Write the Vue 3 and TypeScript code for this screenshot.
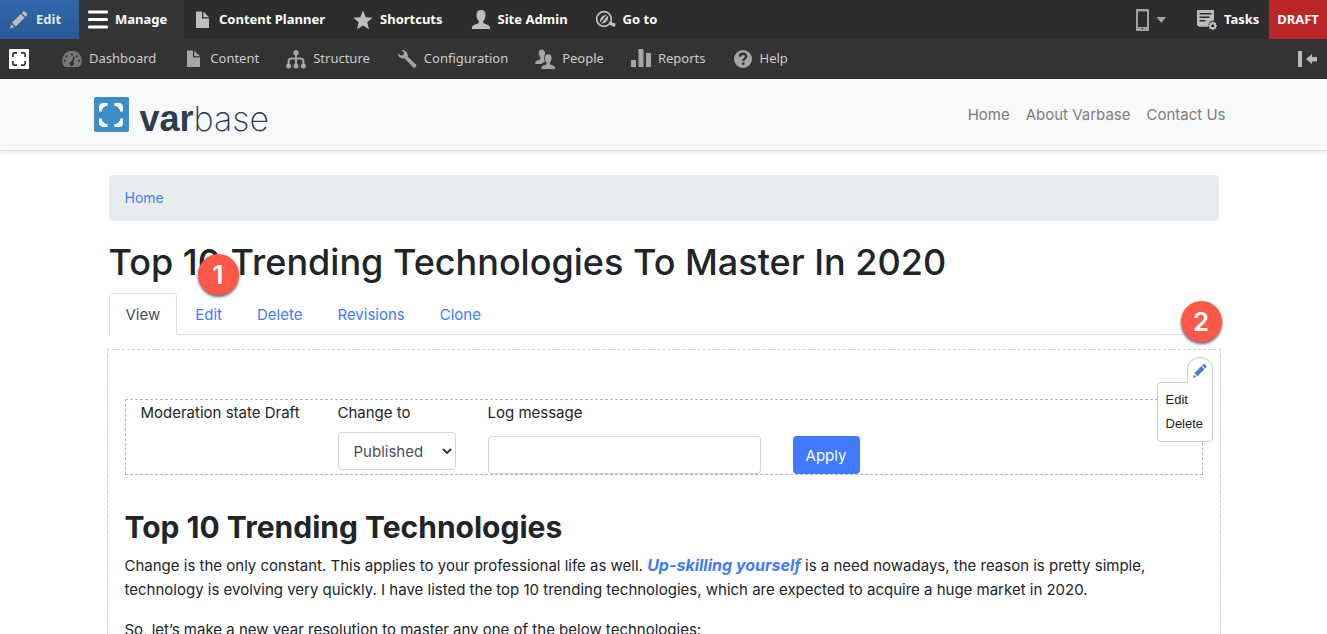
<script setup lang="ts">
import { ref } from 'vue'

interface NavItem {
  label: string
  icon: string
}

const barItems: NavItem[] = [
  { label: 'Content Planner', icon: 'file' },
  { label: 'Shortcuts', icon: 'star' },
  { label: 'Site Admin', icon: 'person' },
  { label: 'Go to', icon: 'goto' },
]

const trayItems: NavItem[] = [
  { label: 'Dashboard', icon: 'gauge' },
  { label: 'Content', icon: 'file' },
  { label: 'Structure', icon: 'tree' },
  { label: 'Configuration', icon: 'wrench' },
  { label: 'People', icon: 'people' },
  { label: 'Reports', icon: 'bars' },
  { label: 'Help', icon: 'help' },
]

const siteLinks: string[] = ['Home', 'About Varbase', 'Contact Us']
const tabs: string[] = ['View', 'Edit', 'Delete', 'Revisions', 'Clone']
const activeTab = ref('View')
const state = ref('Published')
const logMessage = ref('')
</script>

<template>
  <svg class="defs" aria-hidden="true">
    <symbol id="i-file" viewBox="0 0 20 20">
      <path d="M4 1.500h6v7h7V18H4z" />
      <path d="M11.300 1.500L17 7.300h-5.700z" />
    </symbol>
    <symbol id="i-star" viewBox="0 0 20 20">
      <path d="M10 .6l2.700 6.600 7 .5-5.400 4.600 1.700 6.900-6-3.800-6 3.800 1.700-6.900L.3 7.700l7-.5z" />
    </symbol>
    <symbol id="i-person" viewBox="0 0 20 20">
      <path d="M10 .1c-3 0-4.500 2-4.500 4.800 0 2.500.8 4.600 2.300 6v1.800c-.3 1.300-6.900 1.600-6.900 5v1.200h18.200v-1.200c0-3.400-6.600-3.700-6.900-5v-1.800c1.500-1.400 2.300-3.500 2.300-6C14.500 2.100 13 .1 10 .1z" />
    </symbol>
    <symbol id="i-goto" viewBox="0 0 20 20">
      <circle cx="8" cy="9" r="7.300" fill="none" stroke="currentColor" stroke-width="1.700" />
      <path d="M4.200 12.300C3 8.800 6.700 4.500 11 4.800 8 7 7.300 9.500 4.200 12.300zM5.100 13.300C8.500 11 8.800 7.800 12 5.700c1.300 3.700-2.700 8.500-6.900 7.600z" />
      <path d="M14 11.500l5.700 2.200-1 3.300-6.200-2.400z" />
    </symbol>
    <symbol id="i-gauge" viewBox="0 0 20 20">
      <path fill-rule="evenodd" d="M3 18C1 16 0 14 0 11.800a10 10 0 0 1 20 0c0 2.200-1 4.200-3 6.200zM9 4.200v2.200h2V4.200zM4 6l-.9 1.400 1.800 1 .8-1.300zM1.800 10.800v2h2v-2zM16.200 10.800v2h2v-2zM14.800 6l-1.100 1.500 1.400 1 1.200-1.400zM11.600 7.400l-2.200 5.200a2.200 2.200 0 1 0 1.900.5l1.700-5.200z" />
    </symbol>
    <symbol id="i-tree" viewBox="0 0 20 20">
      <circle cx="10" cy="3.700" r="2.600" />
      <circle cx="2.600" cy="16.900" r="2.500" />
      <circle cx="10" cy="16.900" r="2.500" />
      <circle cx="17.400" cy="16.900" r="2.500" />
      <path d="M10 3v13M2.600 16v-3.500q0-3 3-3h8.800q3 0 3 3V16" fill="none" stroke="currentColor" stroke-width="2" />
    </symbol>
    <symbol id="i-wrench" viewBox="0 0 20 20">
      <path d="M.6 4.200C1.300 8 4 10 7.800 9.400l8.200 8.800c1.700 1.800 4.500-.6 2.900-2.600L10.800 7.700C11.200 3.600 8.500.6 4.600.9l2.500 2.700-.6 2.500-2.700.4z" />
    </symbol>
    <symbol id="i-people" viewBox="0 0 20 20">
      <path d="M6.800.5C4.700.5 3.700 2 3.700 4c0 1.700.6 3.200 1.600 4.200V10C5 11.300.3 11.100.3 14v1.100h6.200c.6-1.200 2.100-1.800 3.600-2.200-1-1.800-1.300-4.200-.6-6.400l.6-1.200C10 2.100 9 .5 6.800.5z" />
      <path d="M13.300 5.300c-2.300 0-3.400 1.600-3.400 3.800 0 1.800.6 3.300 1.700 4.400v1.600c-.3 1-5.200 1.100-5.200 4v1H20v-1c0-2.900-4.800-3-5.100-4v-1.600c1.100-1.100 1.700-2.600 1.700-4.400 0-2.200-1-3.800-3.300-3.800z" />
    </symbol>
    <symbol id="i-bars" viewBox="0 0 20 20">
      <path d="M0 11h5v7H0zM7.500 0h5v18h-5zM15 4h5v14h-5z" />
    </symbol>
    <symbol id="i-help" viewBox="0 0 20 20">
      <circle cx="10" cy="10" r="9" />
      <path d="M6.900 7.800c0-4 6.300-3.900 6.300-.5 0 2.200-3 2.400-3 4.700" fill="none" stroke="#333" stroke-width="2.400" />
      <path d="M8.900 13.400h2.500v2.500H8.900z" fill="#333" />
    </symbol>
    <symbol id="i-pencil" viewBox="0 0 20 20">
      <path d="M3 12.700L11.800 3.900l3.800 3.800L6.800 16.500zM12.700 3l1.400-1.400q1-.8 1.900.1l1.800 1.800q.9 1 .1 1.900L16.500 6.800zM2.400 14.300l2.800 2.800L1 18.700z" />
    </symbol>
    <symbol id="i-tasks" viewBox="0 0 20 20">
      <path fill-rule="evenodd" d="M0 0h17v10.500c-3.800-.2-6 2.300-5.700 6.300H2L0 15zM2.500 3v1.400h12V3zM2.500 6.500v1.400h10V6.500zM2.500 10v1.400h6V10z" />
      <circle cx="15.700" cy="15.700" r="2.500" fill="none" stroke="currentColor" stroke-width="2" />
      <path d="M15.700 11.400v1.600M15.700 18.400V20M11.400 15.700H13M18.400 15.700H20M12.700 12.700l1.100 1.100M17.600 17.600l1.100 1.100M12.700 18.700l1.100-1.100M17.600 13.800l1.100-1.100" stroke="currentColor" stroke-width="1.600" />
    </symbol>
    <symbol id="i-brackets" viewBox="0 0 24 24">
      <path d="M8.600 1.500H4Q1.500 1.500 1.500 4v4.600M15.400 1.500H20q2.500 0 2.500 2.500v4.600M8.600 22.500H4q-2.500 0-2.500-2.500v-4.600M15.400 22.500H20q2.500 0 2.500-2.500v-4.600" fill="none" stroke="currentColor" stroke-width="2.800" />
    </symbol>
  </svg>

  <div class="page">
    <nav class="bar" aria-label="Administration toolbar">
      <button class="edit" type="button">
        <svg class="icon"><use href="#i-pencil" /></svg><span class="label">Edit</span>
      </button>
      <button class="manage" type="button">
        <svg class="icon" viewBox="0 0 20 20"><path d="M1 .5h18q1 0 1 1.500t-1 1.500H1Q0 3.500 0 2T1 .5zM1 8h18q1 0 1 1.500T19 11H1q-1 0-1-1.500T1 8zM1 15.500h18q1 0 1 1.500t-1 1.500H1q-1 0-1-1.500t1-1.500z" /></svg><span class="label">Manage</span>
      </button>
      <div class="items">
        <a v-for="item in barItems" :key="item.label" class="item" href="#">
          <svg class="icon"><use :href="'#i-' + item.icon" /></svg><span class="label">{{ item.label }}</span>
        </a>
      </div>
      <div class="bar-end">
        <button class="device" type="button" aria-label="Device preview">
          <svg width="30" height="22" viewBox="0 0 30 22">
            <path fill-rule="evenodd" d="M1 0h11q1 0 1 1v20q0 1-1 1H1q-1 0-1-1V1q0-1 1-1zM2 2.500v15.500h9V2.500zM5.700 19.300v1.200h1.600v-1.200z" />
            <path d="M20.500 8H30l-4.700 6z" />
          </svg>
        </button>
        <a class="item tasks" href="#"><svg class="icon"><use href="#i-tasks" /></svg><span class="label">Tasks</span></a>
        <span class="draft"><span class="label">DRAFT</span></span>
      </div>
    </nav>

    <nav class="tray" aria-label="Manage">
      <a class="tray-home" href="#" aria-label="Home"><svg><use href="#i-brackets" /></svg></a>
      <div class="items">
        <a v-for="item in trayItems" :key="item.label" class="item" :class="item.icon" href="#">
          <svg class="icon"><use :href="'#i-' + item.icon" /></svg><span class="label">{{ item.label }}</span>
        </a>
      </div>
      <button class="orient" type="button" aria-label="Vertical orientation">
        <svg width="20" height="16" viewBox="0 0 20 16"><path d="M0 0h4v16H0zM8 8l6-5v3h5v4.500h-5V13z" /></svg>
      </button>
    </nav>

    <header class="site-header">
      <div class="container header-row">
        <a class="brand" href="#">
          <span class="brand-mark">
            <svg viewBox="0 0 24 24">
              <use href="#i-brackets" />
              <path d="M2 2h4.500l-.6 1.900-1.400.6-.6 1.400L2 6.500zM22 2h-4.500l.6 1.900 1.400.6.6 1.400 1.900.6zM2 22h4.500l-.6-1.900-1.400-.6-.6-1.400-1.900-.6zM22 22h-4.500l.6-1.900 1.400-.6.6-1.400 1.900-.6z" />
            </svg>
          </span>
          <span class="brand-name"><b>var</b><span>base</span></span>
        </a>
        <nav class="site-nav" aria-label="Main">
          <a v-for="link in siteLinks" :key="link" href="#">{{ link }}</a>
        </nav>
      </div>
    </header>

    <main class="container content">
      <nav class="breadcrumb" aria-label="Breadcrumb"><a href="#">Home</a></nav>
      <div class="title-row">
        <h1>Top 10 Trending Technologies To Master In 2020</h1>
        <span class="marker marker-one">1</span>
      </div>
      <nav class="tabs" aria-label="Tabs">
        <a v-for="tab in tabs" :key="tab" href="#" :class="{ active: tab === activeTab }" @click.prevent="activeTab = tab">{{ tab }}</a>
        <span class="marker marker-two">2</span>
      </nav>

      <article class="region">
        <form class="moderation" @submit.prevent>
          <div class="field current">Moderation state Draft</div>
          <div class="field">
            <label for="state">Change to</label>
            <div class="select">
              <select id="state" v-model="state">
                <option>Published</option>
                <option>Draft</option>
              </select>
              <svg class="chevron" viewBox="0 0 10 6"><path d="M1 1l4 4 4-4" /></svg>
            </div>
          </div>
          <div class="field log">
            <label for="log">Log message</label>
            <input id="log" v-model="logMessage" type="text">
          </div>
          <button class="apply" type="submit">Apply</button>
        </form>

        <div class="contextual">
          <button class="trigger" type="button" aria-label="Configuration options"><svg><use href="#i-pencil" /></svg></button>
          <ul>
            <li><a href="#">Edit</a></li>
            <li><a href="#">Delete</a></li>
          </ul>
        </div>

        <h2>Top 10 Trending Technologies</h2>
        <p>Change is the only constant. This applies to your professional life as well. <a href="#"><em>Up-skilling yourself</em></a> is a need nowadays, the reason is pretty simple, technology is evolving very quickly. I have listed the top 10 trending technologies, which are expected to acquire a huge market in 2020.</p>
        <p>So, let’s make a new year resolution to master any one of the below technologies:</p>
      </article>
    </main>
  </div>
</template>

<style>
body {
  margin: 0;
}
</style>

<style scoped>
* {
  box-sizing: border-box;
}
.defs {
  position: absolute;
  width: 0;
  height: 0;
}
.page {
  height: 100vh;
  overflow: hidden;
  background: #fff;
  color: #212529;
  font: 15px/24px Inter, "Liberation Sans", sans-serif;
}
a {
  color: #407bff;
  text-decoration: none;
}
button {
  margin: 0;
  border: 0;
  background: none;
  font: inherit;
  color: inherit;
}
svg {
  display: block;
  fill: currentColor;
}
.icon {
  flex: none;
  width: 20px;
  height: 20px;
  color: #bebebe;
}
.bar,
.tray {
  display: flex;
  align-items: stretch;
  color: #fff;
  font: 13px/20px "Noto Sans", "Open Sans", sans-serif;
}
.bar {
  height: 39px;
  background: #2d2d2d;
  font-weight: 700;
}
.label {
  padding-bottom: 2px;
}
.bar > button {
  display: flex;
  align-items: center;
  gap: 7px;
  white-space: nowrap;
}
.edit {
  width: 79px;
  padding: 0 9px;
  background: linear-gradient(#3068aa, #2a5897);
  color: #e3e9f1;
}
.manage {
  width: 105px;
  padding: 0 9px;
  background: #353535;
}
.manage .icon {
  color: #fff;
}
.items {
  display: flex;
  gap: 28px;
  padding-left: 8px;
}
.item {
  display: flex;
  align-items: center;
  gap: 7px;
  color: #fff;
  white-space: nowrap;
}
.bar-end {
  display: flex;
  margin-left: auto;
}
.device {
  display: flex;
  align-items: center;
  margin-right: 31px;
  padding: 0;
  color: #a3a3a3;
}
.tasks {
  min-width: 72px;
}
.draft {
  display: flex;
  align-items: center;
  justify-content: center;
  width: 58px;
  background: #bd2628;
}
.tray {
  height: 40px;
  padding: 0 9px;
  background: #333;
}
.tray .items {
  gap: 27px;
  padding-left: 33px;
}
.tray .item {
  color: #ccc;
}
.tray .icon {
  color: #a6a6a6;
}
.tray .gauge .icon {
  color: #787878;
}
.tray-home {
  display: flex;
  align-items: center;
  justify-content: center;
  align-self: center;
  width: 20px;
  height: 20px;
  border-radius: 1px;
  background: #fff;
  color: #333;
}
.tray-home svg {
  width: 14px;
  height: 14px;
}
.orient {
  display: flex;
  align-items: center;
  margin-left: auto;
  padding: 0;
  color: #b8b8b8;
}
.container {
  width: 100%;
  max-width: 1140px;
  margin: 0 auto;
}
.site-header {
  height: 72px;
  border-bottom: 1px solid #dee2e6;
  background: #f8f9fb;
  box-shadow: 0 2px 4px rgba(0, 0, 0, 0.08);
}
.header-row {
  display: flex;
  align-items: center;
  justify-content: space-between;
  height: 71px;
}
.brand {
  display: flex;
  align-items: center;
  gap: 11px;
  color: #2c3e50;
}
.brand-mark {
  display: flex;
  align-items: center;
  justify-content: center;
  width: 35px;
  height: 35px;
  border-radius: 2px;
  background: #3d8dc8;
  color: #fff;
}
.brand-mark svg {
  width: 24px;
  height: 24px;
}
.brand-name {
  display: flex;
  align-items: baseline;
  padding-top: 8px;
  font: 36px/40px "Liberation Sans", sans-serif;
}
.brand-name span {
  font-family: Inter, sans-serif;
  font-size: 34px;
  font-weight: 200;
}
.site-nav {
  display: flex;
}
.site-nav a {
  padding: 0 8px;
  color: #7c7d7f;
}
.content {
  padding: 24px 15px 0;
}
.breadcrumb {
  height: 46px;
  padding: 11px 16px;
  border-radius: 4px;
  background: #e9ecef;
  font-size: 14px;
}
.title-row {
  position: relative;
}
h1 {
  margin: 0;
  padding: 17px 0 7px;
  font-size: 36px;
  line-height: 48px;
  font-weight: 500;
}
.marker {
  position: absolute;
  display: flex;
  align-items: center;
  justify-content: center;
  width: 41px;
  height: 41px;
  border-radius: 50%;
  background: #fe5848;
  box-shadow: 0 2px 3px rgba(0, 0, 0, 0.6);
  color: #fff;
  font: 600 26px/40px Inter, sans-serif;
}
.marker-one {
  top: 33px;
  left: 89px;
}
.marker-two {
  top: 8px;
  right: -3px;
}
.tabs {
  position: relative;
  display: flex;
  gap: 1px;
  height: 42px;
  border-bottom: 1px solid #dee2e6;
}
.tabs a {
  height: 42px;
  padding: 9px 16px 8px;
  border: 1px solid transparent;
  border-bottom: 0;
  border-radius: 4px 4px 0 0;
}
.tabs .active {
  border-color: #dee2e6;
  background: #fff;
  color: #495057;
}
.region {
  position: relative;
  margin: 14px -2px 0;
  padding: 49px 17px 0;
  border: 1px dashed #d2d2d2;
}
.moderation {
  display: flex;
  align-items: flex-start;
  gap: 32px;
  height: 76px;
  padding: 0 15px;
  border: 1px dashed #b5b5b5;
}
.field {
  padding-top: 1px;
}
.current {
  min-width: 165px;
}
.field label {
  display: block;
}
.select {
  position: relative;
  width: 118px;
  margin-top: 7px;
}
select,
input {
  display: block;
  width: 100%;
  height: 38px;
  padding: 1px 15px 0;
  border: 1px solid #ced4da;
  border-radius: 4px;
  background: #fff;
  color: #495057;
  font: inherit;
  appearance: none;
}
.chevron {
  position: absolute;
  top: 16px;
  right: 4px;
  width: 10px;
  height: 6px;
  fill: none;
  stroke: #343a40;
  stroke-width: 2;
}
.log {
  width: 273px;
}
.log input {
  margin-top: 11px;
}
.apply {
  width: 67px;
  height: 38px;
  margin-top: 36px;
  padding: 1px 0 0;
  border-radius: 4px;
  background: #407bff;
  color: #fff;
}
.contextual {
  position: absolute;
  top: 7px;
  right: 7px;
  display: flex;
  flex-direction: column;
  align-items: flex-end;
}
.trigger {
  z-index: 1;
  display: flex;
  align-items: center;
  justify-content: center;
  width: 26px;
  height: 26px;
  padding: 0;
  border: 1px solid #ccc;
  border-bottom: 0;
  border-radius: 13px 13px 0 0;
  background: #fff;
  color: #4b7ccb;
}
.trigger svg {
  width: 16px;
  height: 16px;
}
.contextual ul {
  width: 56px;
  margin: -1px 0 0;
  padding: 5px 0;
  border: 1px solid #ccc;
  border-radius: 4px 0 4px 4px;
  background: #fff;
  list-style: none;
}
.contextual li {
  padding: 0 8px;
}
.contextual li a {
  display: block;
  color: #222;
  font: 13px/24px "Liberation Sans", sans-serif;
}
h2 {
  margin: 32px 0 6px;
  font-size: 30px;
  line-height: 40px;
  font-weight: 700;
}
p {
  margin: 0 0 16px;
}
p a {
  font-size: 16px;
  font-weight: 700;
}
</style>
